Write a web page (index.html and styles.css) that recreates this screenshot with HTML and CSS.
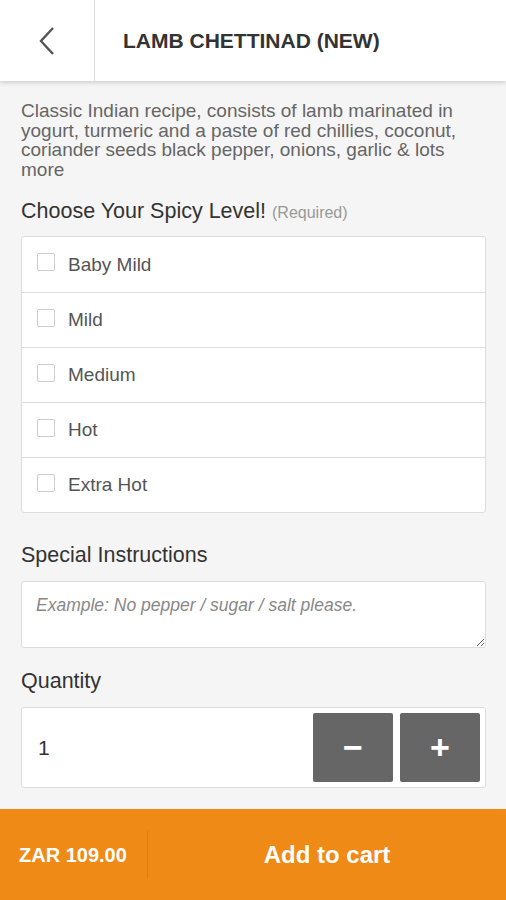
FILE: index.html
```html
<!DOCTYPE html>
<html lang="en">
<head>
    <meta charset="UTF-8">
    <meta name="viewport" content="width=device-width, initial-scale=1.0">
    <title>Lamb Chettinad (New)</title>
    <link rel="stylesheet" href="styles.css">
</head>
<body>
    <header class="topbar">
        <div class="back">
            <svg width="20" height="30" viewBox="0 0 20 30">
                <polyline points="16,2 4,15 16,28" fill="none" stroke="#555" stroke-width="2.4"/>
            </svg>
        </div>
        <h1 class="title">LAMB CHETTINAD (NEW)</h1>
    </header>

    <main class="content">
        <p class="desc">Classic Indian recipe, consists of lamb marinated in yogurt, turmeric and a paste of red chillies, coconut, coriander seeds black pepper, onions, garlic &amp; lots more</p>

        <h2 class="label">Choose Your Spicy Level! <span class="req">(Required)</span></h2>
        <div class="options">
            <label class="option"><span class="box"></span>Baby Mild</label>
            <label class="option"><span class="box"></span>Mild</label>
            <label class="option"><span class="box"></span>Medium</label>
            <label class="option"><span class="box"></span>Hot</label>
            <label class="option"><span class="box"></span>Extra Hot</label>
        </div>

        <h2 class="label label-gap">Special Instructions</h2>
        <textarea class="notes" placeholder="Example: No pepper / sugar / salt please."></textarea>

        <h2 class="label label-qty">Quantity</h2>
        <div class="qty">
            <span class="qty-value">1</span>
            <button class="qty-btn">&minus;</button>
            <button class="qty-btn">+</button>
        </div>
    </main>

    <footer class="cartbar">
        <div class="price">ZAR 109.00</div>
        <div class="add">Add to cart</div>
    </footer>
</body>
</html>
```

FILE: styles.css
```css
body {
    margin: 0;
    background-color: #f5f5f5;
    font-family: "Liberation Sans", Arial, sans-serif;
    color: #333;
    height: 900px;
    overflow: hidden;
    position: relative;
}
.topbar {
    display: flex;
    height: 81px;
    background-color: #fff;
    box-shadow: 0 2px 4px rgba(0, 0, 0, 0.15);
}
.back {
    width: 94px;
    border-right: 1px solid #ddd;
    display: flex;
    align-items: center;
    justify-content: center;
}
.title {
    margin: 0;
    padding-left: 28px;
    font-size: 21px;
    font-weight: bold;
    color: #333;
    line-height: 81px;
}
.content {
    padding: 0 20px 0 21px;
}
.desc {
    margin: 20px 0 0;
    font-size: 19px;
    line-height: 19.5px;
    color: #666;
}
.label {
    margin: 21px 0 0;
    font-size: 21.5px;
    font-weight: normal;
    color: #333;
    line-height: 22px;
}
.req {
    font-size: 16px;
    color: #999;
}
.options {
    margin-top: 12px;
    background-color: #fff;
    border: 1px solid #ddd;
    border-radius: 3px;
}
.option {
    display: flex;
    align-items: center;
    height: 54px;
    padding-left: 15px;
    font-size: 19px;
    color: #555;
    border-top: 1px solid #ddd;
}
.option:first-child {
    height: 55px;
    border-top: none;
}
.box {
    width: 16px;
    height: 16px;
    border: 1px solid #ccc;
    border-radius: 2px;
    margin-right: 13px;
    margin-top: -5px;
}
.label-gap {
    margin-top: 31px;
}
.notes {
    display: block;
    box-sizing: border-box;
    width: 100%;
    height: 67px;
    margin-top: 15px;
    padding: 13px 14px;
    border: 1px solid #ddd;
    border-radius: 3px;
    font-family: "Liberation Sans", Arial, sans-serif;
    font-size: 17.5px;
    font-style: italic;
}
.notes::placeholder {
    color: #888;
}
.label-qty {
    margin-top: 22px;
}
.qty {
    display: flex;
    align-items: center;
    gap: 7px;
    height: 79px;
    margin-top: 15px;
    padding: 0 5px 0 16px;
    background-color: #fff;
    border: 1px solid #ddd;
    border-radius: 3px;
}
.qty-value {
    flex: 1;
    font-size: 21px;
    color: #333;
}
.qty-btn {
    width: 80px;
    height: 69px;
    border: none;
    border-radius: 2px;
    background-color: #666;
    color: #fff;
    font-family: "Liberation Sans", Arial, sans-serif;
    font-size: 34px;
    font-weight: bold;
}
.cartbar {
    position: absolute;
    left: 0;
    right: 0;
    bottom: 0;
    height: 91px;
    display: flex;
    align-items: center;
    background-color: #ef8a17;
    color: #fff;
    font-weight: bold;
}
.price {
    width: 128px;
    padding-left: 19px;
    font-size: 20px;
    line-height: 48px;
    border-right: 1px solid #e07d10;
}
.add {
    flex: 1;
    text-align: center;
    font-size: 24px;
}
```
